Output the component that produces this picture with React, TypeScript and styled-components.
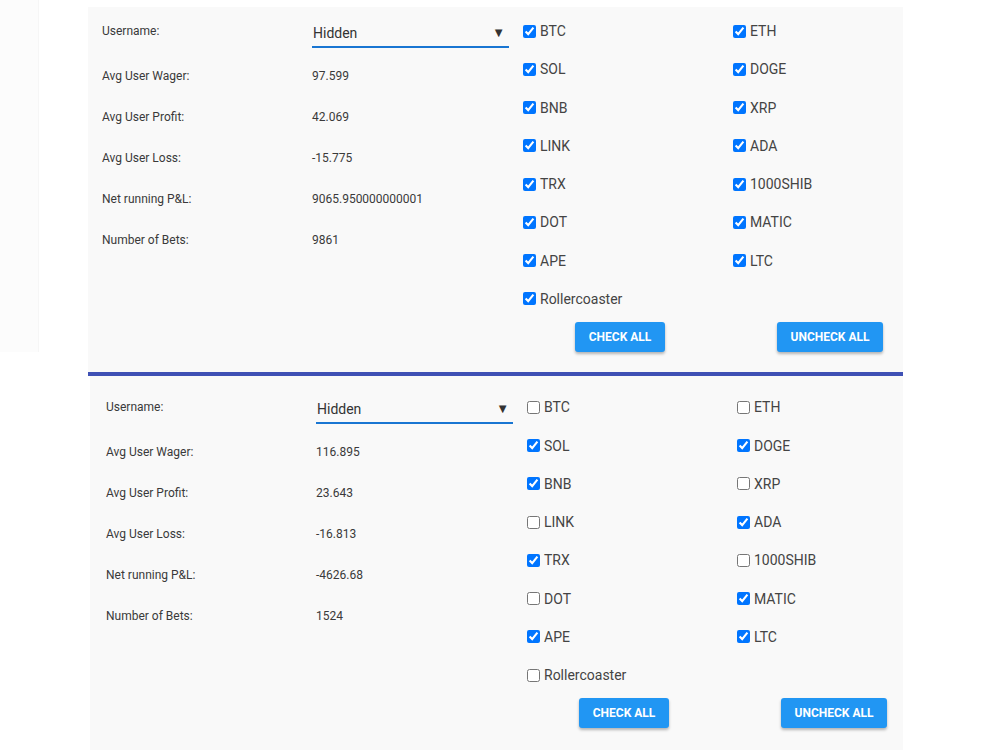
import styled, { createGlobalStyle } from "styled-components"

interface Stats {
  wager: string
  profit: string
  loss: string
  net: string
  bets: string
  checked: string[]
}

interface PanelProps {
  shift?: boolean
}

const Coins = ['BTC', 'ETH', 'SOL', 'DOGE', 'BNB', 'XRP', 'LINK', 'ADA', 'TRX', '1000SHIB', 'DOT', 'MATIC', 'APE', 'LTC', 'Rollercoaster']

const Panels: Stats[] = [
  {
    wager: '97.599',
    profit: '42.069',
    loss: '-15.775',
    net: '9065.950000000001',
    bets: '9861',
    checked: Coins,
  },
  {
    wager: '116.895',
    profit: '23.643',
    loss: '-16.813',
    net: '-4626.68',
    bets: '1524',
    checked: ['SOL', 'DOGE', 'BNB', 'ADA', 'TRX', 'MATIC', 'APE', 'LTC'],
  },
]

const GlobalStyle = createGlobalStyle`
  body {
    margin: 0;
    background: #ffffff;
    font-family: Roboto, "Liberation Sans", sans-serif;
  }
`

const Page = styled.div`
  display: flex;
  align-items: flex-start;
  width: 1000px;
  height: 750px;
  overflow: hidden;
`

const SideStub = styled.div`
  width: 38px;
  height: 352px;
  flex-shrink: 0;
  background: #fcfcfc;
  border-right: 1px solid #f6f6f6;
`

const Main = styled.div`
  margin-left: 49px;
  padding-top: 7px;
  width: 815px;
`

const Panel = styled.section<PanelProps>`
  display: flex;
  background: #f9f9f9;
  box-sizing: border-box;
  width: ${props => props.shift ? 813 : 815}px;
  margin-left: ${props => props.shift ? 2 : 0}px;
  padding: ${props => props.shift ? '7px 0 17px 16px' : '0 0 16px 14px'};
  ${props => !props.shift && `border-bottom: 4px solid #3f51b5;`}
`

const Info = styled.div`
  width: 413px;
  flex-shrink: 0;
  display: flex;
  flex-direction: column;
`

const InfoRow = styled.div<{ first?: boolean }>`
  display: grid;
  grid-template-columns: 210px 197px;
  align-items: center;
  height: ${props => props.first ? 48 : 41}px;
  font-size: 12px;
  color: #3a3a3a;
`

const SelectBox = styled.div`
  display: flex;
  align-items: center;
  justify-content: space-between;
  height: 26px;
  margin-top: 5px;
  padding-left: 1px;
  padding-right: 4px;
  border-bottom: 2px solid #1976d2;
  font-size: 14px;
  color: #333;
`

const Arrow = styled.span`
  font-size: 13px;
  color: #333;
`

const Coinset = styled.div`
  display: grid;
  grid-template-columns: 210px 210px;
  grid-auto-rows: 38.25px;
  padding-top: 5px;
  flex-shrink: 0;
`

const CoinLabel = styled.label`
  display: flex;
  align-items: center;
  padding-left: 4px;
  font-size: 14px;
  color: #444;

  input {
    width: 13px;
    height: 13px;
    margin: 0 4px 0 4px;
  }
`

const ButtonCell = styled.div`
  display: flex;
  justify-content: center;
  align-items: flex-start;
  padding-top: 4px;
`

const ActionButton = styled.button`
  height: 30px;
  padding: 0 14px;
  border: 0;
  border-radius: 3px;
  background: #2196f3;
  color: #ffffff;
  font-family: Roboto, "Liberation Sans", sans-serif;
  font-size: 12px;
  font-weight: 700;
  text-transform: uppercase;
  box-shadow: 0 2px 3px rgba(0, 0, 0, 0.28);
  cursor: pointer;
`

const StatsPanel = ({ data, shift }: { data: Stats, shift?: boolean }) => {
  const rows = [
    ['Avg User Wager:', data.wager],
    ['Avg User Profit:', data.profit],
    ['Avg User Loss:', data.loss],
    ['Net running P&L:', data.net],
    ['Number of Bets:', data.bets],
  ]
  return <Panel shift={shift}>
    <Info>
      <InfoRow first>
        <span>Username:</span>
        <SelectBox>
          <span>Hidden</span>
          <Arrow>▼</Arrow>
        </SelectBox>
      </InfoRow>
      {rows.map(([label, value]) => (
        <InfoRow key={label}>
          <span>{label}</span>
          <span>{value}</span>
        </InfoRow>
      ))}
    </Info>
    <Coinset>
      {Coins.map(coin => (
        <CoinLabel key={coin}>
          <input type="checkbox" readOnly checked={data.checked.includes(coin)} />
          {coin}
        </CoinLabel>
      ))}
      <span />
      <ButtonCell><ActionButton>Check all</ActionButton></ButtonCell>
      <ButtonCell><ActionButton>Uncheck all</ActionButton></ButtonCell>
    </Coinset>
  </Panel>
}

export default function App() {
  return <Page>
    <GlobalStyle />
    <SideStub />
    <Main>
      <StatsPanel data={Panels[0]} />
      <StatsPanel data={Panels[1]} shift />
    </Main>
  </Page>
}
